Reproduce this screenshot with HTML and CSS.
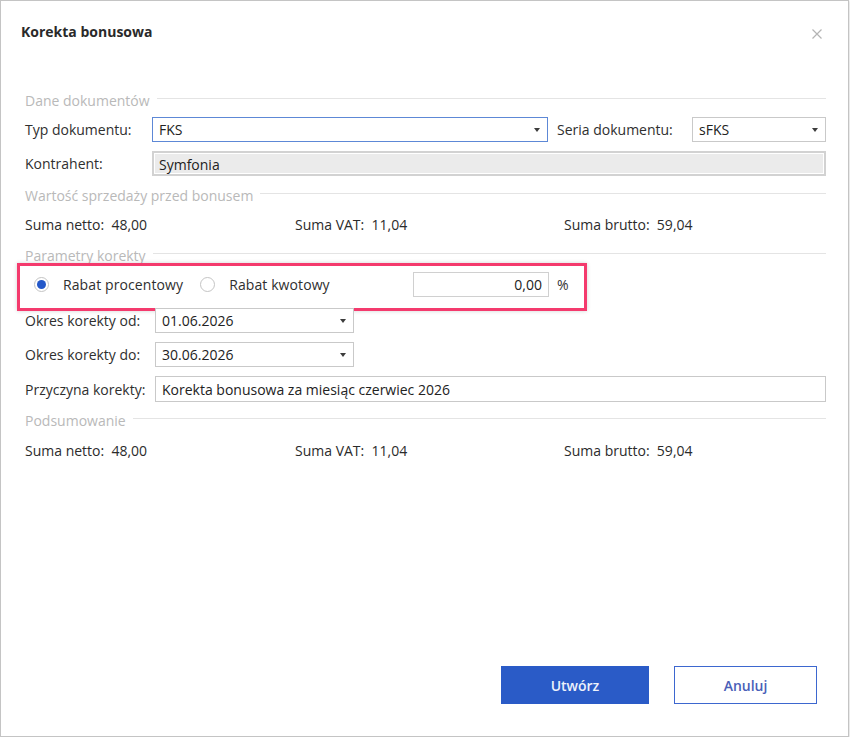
FILE: index.html
```html
<!DOCTYPE html>
<html lang="pl">
<head>
<meta charset="utf-8">
<title>Korekta bonusowa</title>
<link rel="stylesheet" href="styles.css">
</head>
<body>
<div class="dialog">
  <div class="header">
    <div class="title">Korekta bonusowa</div>
    <svg class="close" width="10" height="10" viewBox="0 0 10 10"><path d="M0.5 0.5L9.5 9.5M9.5 0.5L0.5 9.5" stroke="#b4b4b4" stroke-width="1.2" fill="none"/></svg>
  </div>
  <div class="body">
    <div class="group g1"><span class="group-label">Dane dokumentów</span><span class="group-line"></span></div>

    <div class="row r-typ">
      <span class="label lw1">Typ dokumentu:</span>
      <div class="field combo focused w-typ"><span class="val">FKS</span><span class="arrow"></span></div>
      <span class="label lw-seria">Seria dokumentu:</span>
      <div class="field combo grow"><span class="val">sFKS</span><span class="arrow"></span></div>
    </div>

    <div class="row r-kon">
      <span class="label lw1">Kontrahent:</span>
      <div class="field readonly grow"><span class="val">Symfonia</span></div>
    </div>

    <div class="group g2"><span class="group-label">Wartość sprzedaży przed bonusem</span><span class="group-line"></span></div>

    <div class="sums s1">
      <div class="sum">Suma netto:&nbsp; 48,00</div>
      <div class="sum">Suma VAT:&nbsp; 11,04</div>
      <div class="sum">Suma brutto:&nbsp; 59,04</div>
    </div>

    <div class="group g3"><span class="group-label">Parametry korekty</span><span class="group-line"></span></div>

    <div class="row r-radio highlight">
      <div class="radios">
        <span class="radio checked"></span><span class="radio-label first">Rabat procentowy</span>
        <span class="radio"></span><span class="radio-label">Rabat kwotowy</span>
      </div>
      <div class="field w-amount num"><span class="val">0,00</span></div>
      <span class="unit">%</span>
    </div>

    <div class="row r-od">
      <span class="label lw2">Okres korekty od:</span>
      <div class="field combo w-date"><span class="val">01.06.2026</span><span class="arrow"></span></div>
    </div>

    <div class="row r-do">
      <span class="label lw2">Okres korekty do:</span>
      <div class="field combo w-date"><span class="val">30.06.2026</span><span class="arrow"></span></div>
    </div>

    <div class="row r-prz">
      <span class="label lw2">Przyczyna korekty:</span>
      <div class="field grow tall"><span class="val">Korekta bonusowa za miesiąc czerwiec 2026</span></div>
    </div>

    <div class="group g4"><span class="group-label">Podsumowanie</span><span class="group-line"></span></div>

    <div class="sums s2">
      <div class="sum">Suma netto:&nbsp; 48,00</div>
      <div class="sum">Suma VAT:&nbsp; 11,04</div>
      <div class="sum">Suma brutto:&nbsp; 59,04</div>
    </div>
  </div>
  <div class="footer">
    <button class="btn primary">Utwórz</button>
    <button class="btn secondary">Anuluj</button>
  </div>
</div>
</body>
</html>
```
FILE: styles.css
```css
* { box-sizing: border-box; }
html, body { margin: 0; padding: 0; background: #ffffff; }
body {
  font-family: "Open Sans", "Noto Sans", "Liberation Sans", sans-serif;
  font-size: 14px;
  color: #2b2b2b;
}
.dialog {
  width: 849px;
  height: 737px;
  border: 1px solid #c4c4c4;
  background: #fff;
  display: flex;
  flex-direction: column;
  box-shadow: 1px 1px 2px rgba(0,0,0,0.12);
}
.header {
  height: 61px;
  display: flex;
  align-items: center;
  justify-content: space-between;
  padding: 0 26px 0 20px;
}
.title {
  font-weight: 700;
  font-size: 14px;
  color: #2a2a2a;
}
.close { margin-top: 4px; }
.body {
  padding: 0 22px 0 24px;
  display: flex;
  flex-direction: column;
}
.group {
  height: 20px;
  display: flex;
  align-items: center;
  gap: 7px;
}
.group-label { color: #b9b9b9; white-space: nowrap; }
.group-line { flex: 1; height: 1px; background: #e4e4e4; margin-top: -3px; }
.g1 { margin-top: 28px; }
.g2 { margin-top: 9px; }
.g3 { margin-top: 11px; }
.g4 { margin-top: 8px; }

.row { display: flex; align-items: center; height: 25px; }
.r-typ { margin-top: 7px; }
.r-kon { margin-top: 9px; }
.r-radio { margin-top: 7px; }
.r-od { margin-top: 11px; }
.r-do { margin-top: 9px; }
.r-prz { margin-top: 9px; height: 26px; }

.label { white-space: nowrap; color: #2f2f2f; }
.lw1 { width: 127px; flex: none; }
.lw2 { width: 130px; flex: none; }
.lw-seria { width: 135px; margin-left: 9px; flex: none; }

.field {
  height: 25px;
  border: 1px solid #c9c9c9;
  background: #fff;
  display: flex;
  align-items: center;
  padding: 0 6px;
  position: relative;
  color: #222;
}
.field.tall { height: 26px; }
.field.grow { flex: 1; }
.field.focused { border-color: #5d88d6; }
.field.readonly {
  border: 2px solid #d2d2d2;
  background: #ebebeb;
  box-shadow: inset 0 0 0 1px #fff;
  padding-left: 5px;
  padding-top: 2px;
}
.combo .val { flex: 1; }
.arrow {
  width: 0; height: 0;
  border-left: 3.5px solid transparent;
  border-right: 3.5px solid transparent;
  border-top: 4px solid #3c3c3c;
  margin-right: 1px;
}
.w-typ { width: 396px; flex: none; }
.w-date { width: 199px; flex: none; }
.w-amount { width: 136px; flex: none; justify-content: flex-end; border-color: #d0d0d0; }

.sums {
  display: grid;
  grid-template-columns: 270px 269px 1fr;
  height: 20px;
  align-items: center;
  color: #2b2b2b;
}
.s1 { margin-top: 9px; }
.s2 { margin-top: 10px; }

.highlight { position: relative; }
.highlight::after {
  content: "";
  position: absolute;
  left: -8px;
  top: -9px;
  width: 564px;
  height: 42px;
  border: 3px solid #f43a6d;
  box-shadow: 0 0 4px rgba(0,0,0,0.18);
  pointer-events: none;
}
.radios {
  width: 388px;
  flex: none;
  display: flex;
  align-items: center;
  padding-left: 9px;
}
.radio {
  width: 15px; height: 15px;
  border-radius: 50%;
  border: 1px solid #c4c4c4;
  background: #fff;
  display: inline-flex;
  align-items: center;
  justify-content: center;
  flex: none;
}
.radio.checked::before {
  content: "";
  width: 9px; height: 9px;
  border-radius: 50%;
  background: #2458c9;
}
.radio-label { margin-left: 14px; color: #2f2f2f; letter-spacing: 0.1px; }
.radio-label.first { margin-right: 17px; }
.unit { margin-left: 8px; color: #333; }

.footer {
  margin-top: auto;
  display: flex;
  justify-content: flex-end;
  gap: 25px;
  padding: 0 31px 32px 0;
}
.btn {
  font-family: inherit;
  font-size: 14px;
  font-weight: 600;
  height: 38px;
  cursor: pointer;
}
.primary {
  width: 148px;
  background: #2a5bc7;
  border: 1px solid #2a5bc7;
  color: #eef2fb;
}
.secondary {
  width: 143px;
  background: #fff;
  border: 1px solid #3d67cf;
  color: #4a5fb8;
}
```
